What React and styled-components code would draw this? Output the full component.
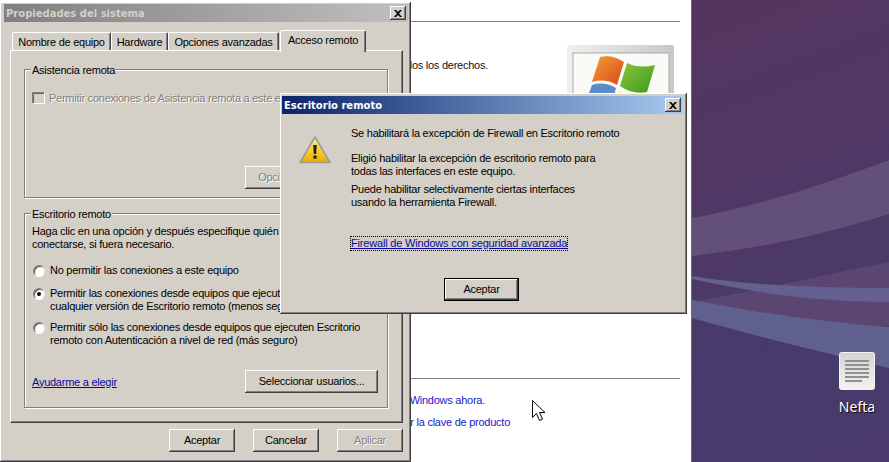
import React from "react";
import styled, { createGlobalStyle } from "styled-components";

const Global = createGlobalStyle`
  html, body { margin: 0; padding: 0; background: #fff; }
  #root { width: 889px; height: 462px; }
`;

const bevel = `box-shadow: inset -1px -1px 0 #404040, inset 1px 1px 0 #fff, inset -2px -2px 0 #808080, inset 2px 2px 0 #d4d0c8;`;

const Screen = styled.div`
  position: relative;
  width: 889px;
  height: 462px;
  overflow: hidden;
  display: flex;
  font-family: "Liberation Sans", Arial, sans-serif;
  font-size: 11px;
  letter-spacing: -0.25px;
  line-height: 13px;
  color: #000;
`;

const Page = styled.main`
  width: 692px;
  flex: none;
  box-sizing: border-box;
  border-right: 1px solid #6b6b70;
  background: #fff;
  padding: 21px 11px 0 300px;
  display: flex;
  flex-direction: column;
`;
const Rule = styled.hr`
  margin: 0;
  border: 0;
  height: 1px;
  background: #808080;
`;
const About = styled.div`
  margin-top: 23px;
  height: 333px;
  display: flex;
  justify-content: space-between;
  align-items: flex-start;
`;
const AboutText = styled.p`
  margin: 14px 0 0;
  width: 188px;
  text-align: right;
  color: #111;
  white-space: nowrap;
`;
const LogoFrame = styled.svg`
  display: block;
  margin-right: 6px;
`;
const PageLink = styled.a`
  display: block;
  color: #1a1ac8;
  white-space: nowrap;
  width: ${(p) => p.$w}px;
  text-align: right;
  margin-top: ${(p) => p.$top}px;
`;

const Desktop = styled.aside`
  position: relative;
  flex: 1;
  background: linear-gradient(160deg, #55355f 0%, #4f3866 45%, #463b6c 75%, #4a3a6b 100%);
`;
const Waves = styled.svg`
  position: absolute;
  inset: 0;
  display: block;
`;
const DesktopItem = styled.div`
  position: absolute;
  left: 139px;
  top: 352px;
  width: 52px;
  display: flex;
  flex-direction: column;
  align-items: center;
  color: #fff;
  font-family: "Noto Sans", sans-serif;
  font-size: 14px;
  letter-spacing: 0;
  line-height: 16px;
  text-shadow: 1px 1px 0 #000;
`;
const DocIcon = styled.svg`
  display: block;
  margin-bottom: 9px;
`;

const Win = styled.section`
  position: absolute;
  left: ${(p) => p.$x}px;
  top: ${(p) => p.$y}px;
  width: ${(p) => p.$w}px;
  height: ${(p) => p.$h}px;
  box-sizing: border-box;
  padding: ${(p) => p.$pad};
  background: #d4d0c8;
  ${bevel}
  display: flex;
  flex-direction: column;
`;
const TitleBar = styled.header`
  height: 18px;
  flex: none;
  display: flex;
  align-items: center;
  justify-content: space-between;
  padding: 0 2px;
  font-family: "DejaVu Sans", Verdana, sans-serif;
  font-weight: 700;
  font-size: 10px;
  letter-spacing: 0;
  background: ${(p) =>
    p.$active
      ? "linear-gradient(90deg, #0a246a, #a6caf0)"
      : "linear-gradient(90deg, #808080, #c0c0c0)"};
  color: ${(p) => (p.$active ? "#fff" : "#d4d0c8")};
`;
const CloseBtn = styled.button`
  width: 16px;
  height: 14px;
  padding: 0;
  border: 0;
  background: #d4d0c8;
  ${bevel}
  display: flex;
  align-items: center;
  justify-content: center;
`;

const TabRow = styled.div`
  margin: 8px 0 0 8px;
  height: 20px;
  display: flex;
  align-items: flex-end;
  position: relative;
  z-index: 1;
`;
const Tab = styled.div`
  box-sizing: border-box;
  width: ${(p) => p.$w}px;
  height: ${(p) => (p.$on ? 22 : 18)}px;
  margin-bottom: ${(p) => (p.$on ? -2 : 0)}px;
  margin-left: ${(p) => (p.$on ? 1 : 0)}px;
  padding-top: 3px;
  text-align: center;
  background: #d4d0c8;
  border-radius: 2px 2px 0 0;
  border-left: 1px solid #fff;
  border-top: 1px solid #fff;
  border-right: 1px solid #404040;
  box-shadow: inset -1px 0 0 #808080;
  white-space: nowrap;
`;
const Pane = styled.div`
  box-sizing: border-box;
  margin: 0 5px 0 6px;
  height: 373px;
  padding: 18px 14px 0;
  border-left: 1px solid #fff;
  border-top: 1px solid #fff;
  border-right: 1px solid #404040;
  border-bottom: 1px solid #404040;
  box-shadow: inset -1px -1px 0 #808080;
  display: flex;
  flex-direction: column;
  gap: 15px;
`;
const Group = styled.div`
  position: relative;
  box-sizing: border-box;
  height: ${(p) => p.$h}px;
  padding: ${(p) => p.$pad};
  margin: 0 0 0 -1px;
  border: 1px solid #808080;
  box-shadow: 1px 1px 0 #fff, inset 1px 1px 0 #fff;
  display: flex;
  flex-direction: column;
`;
const Legend = styled.span`
  position: absolute;
  top: -6px;
  left: 6px;
  padding: 0 1px;
  background: #d4d0c8;
`;
const Option = styled.label`
  display: flex;
  gap: 5px;
  padding-left: 1px;
  margin-top: ${(p) => p.$top || 0}px;
  white-space: nowrap;
  color: ${(p) => (p.$off ? "#808080" : "#000")};
  text-shadow: ${(p) => (p.$off ? "1px 1px 0 #fff" : "none")};
`;
const CheckBox = styled.span`
  flex: none;
  box-sizing: border-box;
  width: 13px;
  height: 12px;
  margin: 0 -1px 0 -1px;
  background: #d4d0c8;
  border-top: 1px solid #808080;
  border-left: 1px solid #808080;
  border-right: 1px solid #fff;
  border-bottom: 1px solid #fff;
  box-shadow: inset 1px 1px 0 #666;
`;
const Radio = styled.span`
  flex: none;
  position: relative;
  box-sizing: border-box;
  width: 12px;
  height: 12px;
  margin-top: 1px;
  border-radius: 50%;
  background: #fff;
  border: 1px solid;
  border-color: #808080 #e8e6e0 #fff #808080;
  box-shadow: inset 1px 1px 0 #505050;
  &::after {
    content: "";
    display: ${(p) => (p.$on ? "block" : "none")};
    position: absolute;
    left: 3px;
    top: 3px;
    width: 4px;
    height: 4px;
    border-radius: 50%;
    background: #000;
  }
`;
const Para = styled.p`
  margin: ${(p) => p.$top || 0}px 0 0;
  white-space: nowrap;
`;
const Foot = styled.div`
  margin-top: 23px;
  display: flex;
  justify-content: space-between;
  align-items: center;
`;
const HelpLink = styled.a`
  color: #0a0a9a;
  text-decoration: underline;
  padding-top: 1px;
`;
const Btn = styled.button`
  box-sizing: border-box;
  flex: none;
  width: ${(p) => p.$w}px;
  height: ${(p) => p.$h || 23}px;
  padding: 0;
  border: 0;
  background: #d4d0c8;
  font: inherit;
  letter-spacing: inherit;
  color: ${(p) => (p.$off ? "#808080" : "#000")};
  text-shadow: ${(p) => (p.$off ? "1px 1px 0 #fff" : "none")};
  white-space: nowrap;
  box-shadow: ${(p) =>
    p.$def
      ? "inset 0 0 0 1px #000, inset -2px -2px 0 #404040, inset 2px 2px 0 #fff, inset -3px -3px 0 #808080"
      : "inset -1px -1px 0 #404040, inset 1px 1px 0 #fff, inset -2px -2px 0 #808080"};
`;
const GroupButton = styled(Btn)`
  align-self: flex-end;
  margin-top: auto;
`;
const Actions = styled.div`
  margin: 6px 5px 0 0;
  display: flex;
  justify-content: flex-end;
  gap: 18px;
`;

const Body = styled.div`
  display: flex;
  gap: 20px;
  padding: 13px 0 0 17px;
`;
const WarnIcon = styled.svg`
  display: block;
  flex: none;
  margin-top: 9px;
`;
const Copy = styled.div`
  display: flex;
  flex-direction: column;
`;
const FirewallLink = styled.a`
  align-self: flex-start;
  margin-top: 28px;
  color: #0a0a9a;
  letter-spacing: -0.18px;
  text-decoration: underline;
  outline: 1px dotted #000;
  white-space: nowrap;
`;
const ModalActions = styled.div`
  margin-top: 28px;
  padding-right: 2px;
  display: flex;
  justify-content: center;
`;
const Cursor = styled.svg`
  position: absolute;
  left: 532px;
  top: 400px;
`;

const CloseGlyph = () => (
  <svg width="8" height="7" viewBox="0 0 8 7">
    <path d="M0 0h2l2 2 2-2h2L5 3.5 8 7H6L4 5 2 7H0l3-3.5z" fill="#000" />
  </svg>
);

export default function App() {
  return (
    <Screen>
      <Global />
      <Page>
        <Rule />
        <About>
          <AboutText>Reservados todos los derechos.</AboutText>
          <LogoFrame width="107" height="60" viewBox="0 0 107 60">
            <defs>
              <linearGradient id="fr" x1="0" x2="1">
                <stop offset="0" stopColor="#f0f0ee" />
                <stop offset="1" stopColor="#c8c8cc" />
              </linearGradient>
              <linearGradient id="or" x1="0" y1="0" x2="1" y2="1">
                <stop offset="0" stopColor="#f4a030" />
                <stop offset="1" stopColor="#d8481c" />
              </linearGradient>
              <linearGradient id="gr" x1="0" y1="0" x2="1" y2="1">
                <stop offset="0" stopColor="#8cc840" />
                <stop offset="1" stopColor="#3c9818" />
              </linearGradient>
            </defs>
            <rect width="107" height="60" rx="2" fill="url(#fr)" />
            <rect x="6" y="8" width="96" height="52" fill="#fafaf6" stroke="#aaa" />
            <path d="M33 12q12-3 24 5l-7 23q-12-7-25-3z" fill="url(#or)" />
            <path d="M60 18q12 6 28 2l-8 27q-14 3-27-6z" fill="url(#gr)" />
            <path d="M22 48l3-8q12-4 24 3l-3 12z" fill="#5a8ccc" />
            <path d="M53 47q12 6 25 3l-2 8H52z" fill="#f0c030" />
          </LogoFrame>
        </About>
        <Rule />
        <PageLink $w="185" $top="15">Activar Windows ahora.</PageLink>
        <PageLink $w="210" $top="9">Cambiar la clave de producto</PageLink>
      </Page>
      <Desktop>
        <Waves width="197" height="462" viewBox="0 0 197 462">
          <path d="M0 218C70 205 130 185 197 160V214C130 235 70 248 0 256z" fill="#625078" />
          <path d="M0 302C70 290 130 275 197 262V326C130 326 70 315 0 302z" fill="#5a4670" />
          <path d="M0 276C60 286 130 288 197 288V302C120 302 60 292 0 279z" fill="#64608f" />
          <path d="M0 300C60 312 130 322 197 327V368C120 350 60 335 0 318z" fill="#60608f" />
        </Waves>
        <DesktopItem>
          <DocIcon width="36" height="38" viewBox="0 0 36 38">
            <defs>
              <linearGradient id="doc" x1="0" y1="0" x2="0" y2="1">
                <stop offset="0" stopColor="#d4d4d4" />
                <stop offset="1" stopColor="#f2f2f2" />
              </linearGradient>
            </defs>
            <rect x=".5" y=".5" width="35" height="37" rx="2" fill="url(#doc)" stroke="#f4f4f4" />
            <path d="M6 9h24M6 13h24M6 17h24M6 21h24M6 25h24M6 29h17" stroke="#909090" strokeWidth="2" />
          </DocIcon>
          Nefta
        </DesktopItem>
      </Desktop>

      <Win $x={0} $y={2} $w={411} $h={460} $pad="2px 3px 0 4px">
        <TitleBar>
          Propiedades del sistema
          <CloseBtn><CloseGlyph /></CloseBtn>
        </TitleBar>
        <TabRow>
          <Tab $w={99}>Nombre de equipo</Tab>
          <Tab $w={57}>Hardware</Tab>
          <Tab $w={111}>Opciones avanzadas</Tab>
          <Tab $w={86} $on>Acceso remoto</Tab>
        </TabRow>
        <Pane>
          <Group $h={129} $pad="22px 9px 8px 7px">
            <Legend>Asistencia remota</Legend>
            <Option $off>
              <CheckBox />
              Permitir conexiones de Asistencia remota a este equipo
            </Option>
            <GroupButton $w={133} $off>Opciones avanzadas...</GroupButton>
          </Group>
          <Group $h={195} $pad="11px 9px 0 7px">
            <Legend>Escritorio remoto</Legend>
            <Para>
              Haga clic en una opción y después especifique quién puede
              <br />
              conectarse, si fuera necesario.
            </Para>
            <Option $top={13}>
              <Radio />
              No permitir las conexiones a este equipo
            </Option>
            <Option $top={10}>
              <Radio $on />
              <span>
                Permitir las conexiones desde equipos que ejecuten
                <br />
                cualquier versión de Escritorio remoto (menos seguro)
              </span>
            </Option>
            <Option $top={8}>
              <Radio />
              <span>
                Permitir sólo las conexiones desde equipos que ejecuten Escritorio
                <br />
                remoto con Autenticación a nivel de red (más seguro)
              </span>
            </Option>
            <Foot>
              <HelpLink>Ayudarme a elegir</HelpLink>
              <Btn $w={133}>Seleccionar usuarios...</Btn>
            </Foot>
          </Group>
        </Pane>
        <Actions>
          <Btn $w={66}>Aceptar</Btn>
          <Btn $w={66}>Cancelar</Btn>
          <Btn $w={66} $off>Aplicar</Btn>
        </Actions>
      </Win>

      <Win $x={280} $y={93} $w={407} $h={221} $pad="3px 4px 0 2px">
        <TitleBar $active>
          Escritorio remoto
          <CloseBtn><CloseGlyph /></CloseBtn>
        </TitleBar>
        <Body>
          <WarnIcon width="32" height="28" viewBox="0 0 32 28">
            <defs>
              <linearGradient id="warn" x1="0" y1="0" x2="0" y2="1">
                <stop offset="0" stopColor="#fff27a" />
                <stop offset="1" stopColor="#efaa00" />
              </linearGradient>
            </defs>
            <path d="M16 1l15 25.5H1z" fill="url(#warn)" stroke="#9a9a9a" strokeWidth="1.5" strokeLinejoin="round" />
            <path d="M14.2 9h3.6l-.6 9h-2.4z" fill="#222" />
            <rect x="14.4" y="19.5" width="3.2" height="3.2" fill="#222" />
          </WarnIcon>
          <Copy>
            <Para>Se habilitará la excepción de Firewall en Escritorio remoto</Para>
            <Para $top={12}>
              Eligió habilitar la excepción de escritorio remoto para
              <br />
              todas las interfaces en este equipo.
            </Para>
            <Para $top={5}>
              Puede habilitar selectivamente ciertas interfaces
              <br />
              usando la herramienta Firewall.
            </Para>
            <FirewallLink>Firewall de Windows con seguridad avanzada</FirewallLink>
          </Copy>
        </Body>
        <ModalActions>
          <Btn $w={75} $def>Aceptar</Btn>
        </ModalActions>
      </Win>

      <Cursor width="13" height="22" viewBox="0 0 13 22">
        <path d="M.5.5v17l4-4 3 7 3-1.3-3-6.7h5.500z" fill="#fff" stroke="#000" strokeLinejoin="miter" />
      </Cursor>
    </Screen>
  );
}
